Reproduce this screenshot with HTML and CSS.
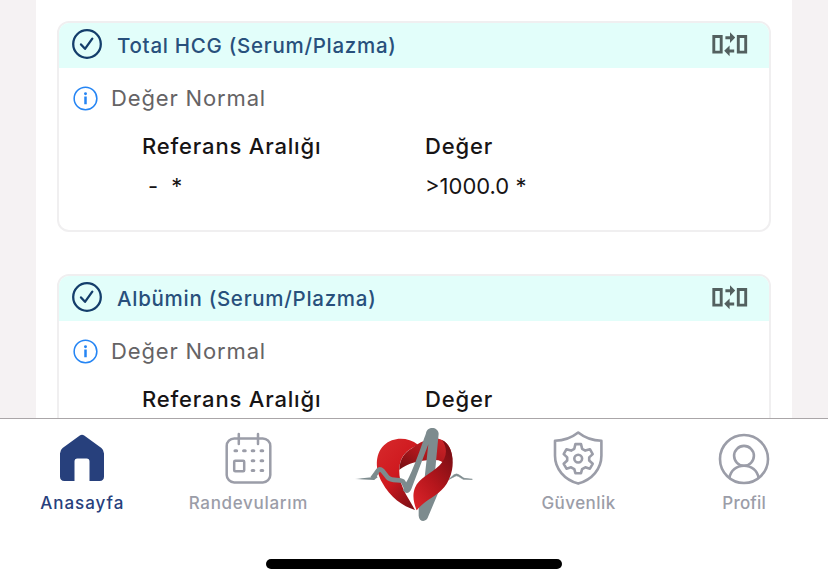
FILE: index.html
```html
<!DOCTYPE html>
<html lang="tr">
<head>
    <meta charset="UTF-8">
    <meta name="viewport" content="width=device-width, initial-scale=1.0">
    <title>Tahlil Sonuçları</title>
    <link rel="stylesheet" href="styles.css">
</head>
<body>
    <!-- Shared icons -->
    <svg class="sprite" xmlns="http://www.w3.org/2000/svg">
        <symbol id="icon-check" viewBox="0 0 30 30">
            <circle cx="15" cy="15" r="13.8" fill="none" stroke="currentColor" stroke-width="2.3"/>
            <path d="M9 15.4l4 4.4 7.3-10.2" fill="none" stroke="currentColor" stroke-width="2.3" stroke-linecap="round" stroke-linejoin="round"/>
        </symbol>
        <symbol id="icon-info" viewBox="0 0 26 26">
            <circle cx="13" cy="13" r="11.8" fill="none" stroke="currentColor" stroke-width="1.6"/>
            <path d="M13 11v8" stroke="currentColor" stroke-width="2.6"/>
            <circle cx="13" cy="8" r="1.5" fill="currentColor"/>
        </symbol>
        <symbol id="icon-compare" viewBox="0 0 36 26">
            <path d="M1.8 5.5h7.4v15.6H1.8zM26.3 5.5h7.4v15.6h-7.4z" fill="none" stroke="currentColor" stroke-width="2.9"/>
            <path d="M13.4 5.2h4.6V1.2l5.2 5.4-5.2 5.4V8.2h-4.6zM22.2 18.4h-4.6v-4l-5.4 5.4 5.4 5.4v-3.8h4.6z" fill="currentColor"/>
        </symbol>
    </svg>

    <main class="results">
        <section class="card">
            <header class="card-header">
                <svg class="check"><use href="#icon-check"/></svg>
                <h2>Total HCG (Serum/Plazma)</h2>
                <svg class="compare"><use href="#icon-compare"/></svg>
            </header>
            <div class="status">
                <svg class="info"><use href="#icon-info"/></svg>
                <span>Değer Normal</span>
            </div>
            <div class="values">
                <div class="label">Referans Aralığı</div>
                <div class="label">Değer</div>
                <div class="value range"><span>-</span><span>*</span></div>
                <div class="value">&gt;1000.0 *</div>
            </div>
        </section>

        <section class="card">
            <header class="card-header">
                <svg class="check"><use href="#icon-check"/></svg>
                <h2>Albümin (Serum/Plazma)</h2>
                <svg class="compare"><use href="#icon-compare"/></svg>
            </header>
            <div class="status">
                <svg class="info"><use href="#icon-info"/></svg>
                <span>Değer Normal</span>
            </div>
            <div class="values">
                <div class="label">Referans Aralığı</div>
                <div class="label">Değer</div>
            </div>
        </section>
    </main>

    <nav class="tabbar">
        <div class="tabs">
            <a class="tab tab-home active">
                <svg viewBox="0 0 54 54">
                    <path d="M24.8 4.6Q27 2.9 29.2 4.6L46.4 17.1Q49 19.2 49 22.6V45.6Q49 50 44.6 50H34.5V30.4Q34.5 27.5 31.6 27.5H22.4Q19.5 27.5 19.5 30.4V50H9.4Q5 50 5 45.6V22.6Q5 19.2 7.6 17.1Z" fill="currentColor"/>
                </svg>
                <span>Anasayfa</span>
            </a>
            <a class="tab tab-dates">
                <svg viewBox="0 0 54 54" fill="none" stroke="currentColor" stroke-width="2.5" stroke-linecap="round">
                    <rect x="5.7" y="7.4" width="43.6" height="44" rx="7.5"/>
                    <path d="M17.8 3v10M37 3v10"/>
                    <rect x="13.2" y="29.8" width="10" height="10.5" rx="1"/>
                    <path d="M14 19.8h1.6M22.6 19.8h1.6M31.2 19.8h1.6M40.1 19.8h1.6M31.2 29.7h1.6M40.1 29.7h1.6M31.2 39.5h1.6M40.1 39.5h1.6" stroke-width="3.1"/>
                </svg>
                <span>Randevularım</span>
            </a>
            <a class="tab tab-logo">
                <svg viewBox="0 0 420 360">
                    <defs>
                        <linearGradient id="lobe" x1="0" y1="0" x2=".7" y2="1">
                            <stop offset="0" stop-color="#d72a2c"/>
                            <stop offset=".55" stop-color="#cf191f"/>
                            <stop offset="1" stop-color="#851016"/>
                        </linearGradient>
                        <linearGradient id="fold" x1="0" y1="1" x2="1" y2="0">
                            <stop offset="0" stop-color="#6b0d12"/>
                            <stop offset=".45" stop-color="#a9161b"/>
                            <stop offset="1" stop-color="#d4262b"/>
                        </linearGradient>
                        <linearGradient id="ribbon" x1="0" y1="1" x2=".7" y2="0">
                            <stop offset="0" stop-color="#e0252b"/>
                            <stop offset=".5" stop-color="#b5161c"/>
                            <stop offset="1" stop-color="#7b0e14"/>
                        </linearGradient>
                        <linearGradient id="tail" x1="0" x2="1">
                            <stop offset="0" stop-color="#7d8b8e" stop-opacity=".3"/>
                            <stop offset=".3" stop-color="#7d8b8e"/>
                        </linearGradient>
                    </defs>
                    <!-- left half of the heart -->
                    <path d="M219 89C188 66 145 65 117 91C88 119 91 166 111 202C136 248 173 274 210 285C199 263 178 235 169 206C158 171 162 137 177 119C188 105 204 96 219 89Z" fill="url(#lobe)"/>
                    <!-- folded band across the top -->
                    <path d="M163 164C164 132 178 113 202 99C228 78 265 63 291 75C310 84 321 105 322 132C320 153 309 165 292 177C307 157 303 143 280 136C238 131 194 141 163 164Z" fill="url(#fold)"/>
                    <!-- pulse peak -->
                    <path d="M243 55C246 33 279 34 281 56L270 172L238 196L250 88L199 222C193 237 181 237 174 226L182 204C196 190 234 80 243 55Z" fill="#7d8b8e"/>
                    <!-- pulse tip under the ribbon -->
                    <path d="M221 270V302C222 322 245 323 250 304L286 218L262 238Z" fill="#7d8b8e"/>
                    <path d="M291 75C318 87 328 127 321 165C313 208 287 232 260 248C239 261 227 271 215 286C206 265 201 240 210 218C222 190 258 176 284 151C306 128 309 100 291 75Z" fill="url(#ribbon)"/>
                    <!-- pulse line on the left -->
                    <path d="M184 221L175 201C169 190 141 201 128 187L113 168C103 158 101 163 93 175L82 190" fill="none" stroke="#7d8b8e" stroke-width="14" stroke-linejoin="round"/>
                    <path d="M29 192L51 190L80 187L91 178L98 187L87 195Z" fill="url(#tail)"/>
                    <!-- pulse line on the right -->
                    <path d="M312 193L326 180Q335 173 344 181L357 190L382 193L355 193L340 184Q334 180 328 185Z" fill="#7d8b8e" stroke="#7d8b8e" stroke-width="2"/>
                </svg>
            </a>
            <a class="tab tab-security">
                <svg viewBox="0 0 54 54" fill="none" stroke="currentColor" stroke-width="2.6" stroke-linejoin="round">
                    <path d="M26.2 1.6C20.2 6.4 11.7 9.7 3 9.8V24.8C3 37.8 12.2 48.6 26.2 52.6C40.2 48.6 49.4 37.8 49.4 24.8V9.8C40.7 9.7 32.2 6.4 26.2 1.6Z"/>
                    <path d="M23.4 13.1h5.6l1.1 4.7 3.2 1.8 4.6-1.4 2.8 4.9-3.5 3.3v3.1l3.5 3.3-2.8 4.9-4.6-1.4-3.2 1.8-1.1 4.1h-5.6l-1.1-4.1-3.2-1.8-4.6 1.4-2.8-4.9 3.5-3.3v-3.1l-3.5-3.3 2.8-4.9 4.6 1.4 3.2-1.8z"/>
                    <circle cx="26.2" cy="27.6" r="3.9"/>
                </svg>
                <span>Güvenlik</span>
            </a>
            <a class="tab tab-profile">
                <svg viewBox="0 0 54 54" fill="none" stroke="currentColor" stroke-width="2.6">
                    <circle cx="27" cy="28" r="24"/>
                    <circle cx="27" cy="24.8" r="9.9"/>
                    <path d="M12.5 46.7C13.6 39.5 19.5 34.7 27 34.7S40.4 39.5 41.5 46.7"/>
                </svg>
                <span>Profil</span>
            </a>
        </div>
        <div class="home-indicator"></div>
    </nav>
</body>
</html>
```
FILE: styles.css
```css
:root {
    --page-bg: #f5f2f3;
    --card-border: #f0eff0;
    --header-bg: #e2fefa;
    --navy: #27407c;
    --title: #28507c;
    --muted: #9b9da8;
}

* {
    box-sizing: border-box;
}

body {
    margin: 0;
    height: 100vh;
    overflow: hidden;
    display: flex;
    flex-direction: column;
    background-color: var(--page-bg);
    font-family: 'Inter', 'Liberation Sans', sans-serif;
    color: #171415;
}

.sprite {
    display: none;
}

svg {
    display: block;
    flex: none;
}

.results {
    flex: 1;
    min-height: 0;
    overflow: hidden;
    margin: 0 36px;
    padding: 21px 21px 0;
    background-color: #fff;
}

/* --- Result cards --- */

.card {
    height: 211px;
    margin-bottom: 42px;
    border: 2px solid var(--card-border);
    border-radius: 12px;
    overflow: hidden;
}

.card-header {
    display: flex;
    align-items: center;
    height: 45px;
    padding: 0 21px 0 13px;
    background-color: var(--header-bg);
}

.card-header h2 {
    flex: 1;
    margin: 0 0 0 15px;
    font-size: 20.5px;
    font-weight: 500;
    line-height: 45px;
    letter-spacing: 0.72px;
    color: var(--title);
}

.check {
    width: 30px;
    height: 30px;
    margin-bottom: 3px;
    color: #143e6b;
}

.compare {
    width: 36px;
    height: 26px;
    margin-bottom: 4px;
    color: #53605f;
}

.status {
    display: flex;
    align-items: center;
    height: 60px;
    padding-left: 14px;
    font-size: 22px;
    letter-spacing: 0.85px;
    color: #656365;
}

.info {
    width: 25px;
    height: 25px;
    margin-right: 13px;
    color: #2585f4;
}

.values {
    display: grid;
    grid-template-columns: 283px 1fr;
    grid-template-rows: 36px 44px;
    align-items: center;
    padding-left: 83px;
    font-size: 22px;
}

.label {
    font-weight: 500;
    letter-spacing: 0.82px;
}

.range {
    display: flex;
    gap: 13px;
    padding-left: 6px;
}

/* --- Bottom navigation --- */

.tabbar {
    height: 167px;
    background-color: #fff;
    border-top: 1px solid #aaa6a8;
}

.tabs {
    display: grid;
    grid-template-columns: repeat(5, 1fr);
    height: 140px;
}

.tab {
    display: flex;
    flex-direction: column;
    align-items: center;
    padding-top: 12px;
    font-size: 17px;
    font-weight: 500;
    line-height: 36px;
    color: var(--muted);
}

.tab svg {
    width: 54px;
    height: 54px;
}

.tab.active {
    color: var(--navy);
}

.tab-home {
    padding-right: 1px;
    letter-spacing: 0.95px;
}

.tab-dates {
    letter-spacing: 0.7px;
}

.tab-security {
    padding-right: 2px;
    letter-spacing: 0.45px;
}

.tab-profile {
    padding-right: 2px;
    letter-spacing: 0.2px;
}

.tab.tab-logo {
    padding: 0 0 0 2px;
}

.tab-logo svg {
    width: 140px;
    height: 120px;
    margin-top: -4px;
}

.home-indicator {
    width: 296px;
    height: 10px;
    margin: 0 auto;
    border-radius: 5px;
    background-color: #000;
}
```
